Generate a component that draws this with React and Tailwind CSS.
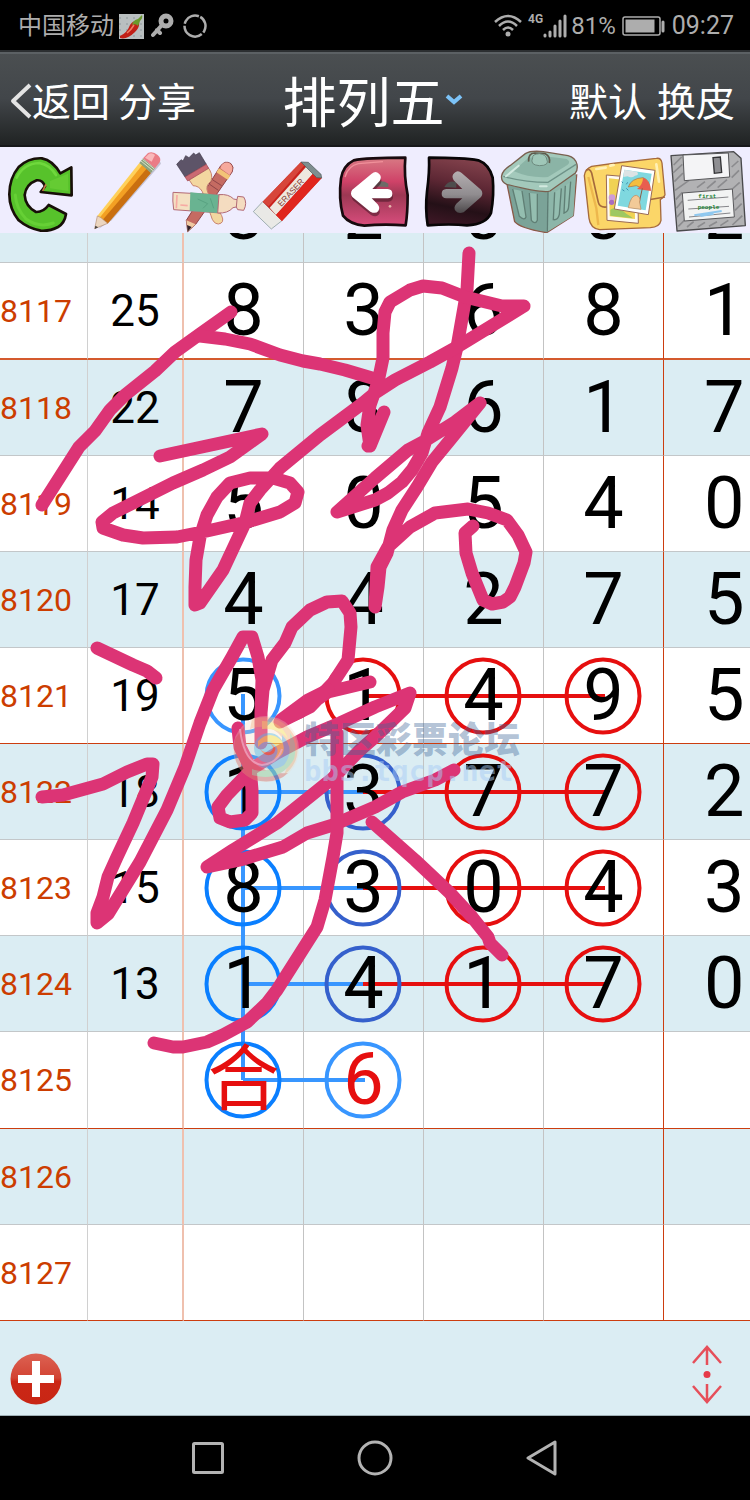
import React from 'react';

const rows = [
  { id: '', sum: '', digits: ['8', '2', '0', '0', '2'] },
  { id: '8117', sum: '25', digits: ['8', '3', '6', '8', '1'], groupEnd: true },
  { id: '8118', sum: '22', digits: ['7', '8', '6', '1', '7'] },
  { id: '8119', sum: '14', digits: ['5', '0', '5', '4', '0'] },
  { id: '8120', sum: '17', digits: ['4', '4', '2', '7', '5'] },
  { id: '8121', sum: '19', digits: ['5', '1', '4', '9', '5'], groupEnd: true },
  { id: '8122', sum: '18', digits: ['1', '3', '7', '7', '2'] },
  { id: '8123', sum: '15', digits: ['8', '3', '0', '4', '3'] },
  { id: '8124', sum: '13', digits: ['1', '4', '1', '7', '0'] },
  { id: '8125', sum: '', digits: ['合', '6', '', '', ''], groupEnd: true, predicted: true },
  { id: '8126', sum: '', digits: ['', '', '', '', ''] },
  { id: '8127', sum: '', digits: ['', '', '', '', ''], groupEnd: true },
];

const tallRows = ['8117', '8125'];

const BLUE = '#0a7fff';
const LIGHT_BLUE = '#3896ff';
const INDIGO = '#3560cc';
const RED = '#e60f0f';

const circles = [
  [243, 696, LIGHT_BLUE], [363, 696, RED], [483, 696, RED], [603, 696, RED],
  [243, 792, BLUE], [363, 792, INDIGO], [483, 792, RED], [603, 792, RED],
  [243, 888, BLUE], [363, 888, INDIGO], [483, 888, RED], [603, 888, RED],
  [243, 984, BLUE], [363, 984, INDIGO], [483, 984, RED], [603, 984, RED],
  [243, 1080, BLUE], [363, 1080, LIGHT_BLUE],
];

const links = [
  [243, 694, 243, 1080, LIGHT_BLUE],
  [243, 792, 363, 792, LIGHT_BLUE],
  [243, 888, 363, 888, LIGHT_BLUE],
  [243, 984, 363, 984, LIGHT_BLUE],
  [243, 1080, 365, 1080, LIGHT_BLUE],
  [363, 696, 605, 696, RED],
  [363, 792, 605, 792, RED],
  [363, 888, 605, 888, RED],
  [363, 984, 605, 984, RED],
];

// freehand pen strokes on top of the grid
const strokes = [
  '231,312 200,334 175,352 155,371 125,395 110,410 95,431 79,447 42,505',
  '200,336 225,339 250,344 280,355 303,361 320,364 345,370 372,378',
  '469,253 467,290 457,347 452,368 440,407 428,433 422,453 412,470 402,482 388,493 375,500 337,512 375,478 408,450 423,442 455,422 480,403 450,440 432,462 417,487 402,510 393,530 387,553 380,567 378,587 375,607 377,567 388,547 410,527 435,513 468,509 488,513 507,520 518,535 526,552 524,563 515,587 510,597 503,602 492,604 483,600 472,573 466,553 465,533 473,526',
  '368,446 384,412 370,446 367,425 370,405 378,382 383,358 383,333 385,312 390,302 410,290 423,286 442,288 465,297 502,306 524,306 457,347 430,362 395,380 375,393 363,403 320,435 280,468 260,490 250,503 245,523 223,570 200,603 195,605 195,587 196,560 200,537 207,515 217,497 230,483 250,478 273,478 290,483 298,492 295,503 280,512 247,522 207,531 177,537 143,538 123,535 103,528 102,522 113,513 143,498 173,483 203,470 230,457 262,434 160,456',
  '97,648 133,665 147,671 156,678',
  '42,797 63,795 103,784 127,772 147,764 153,764 152,777 133,823 117,857 108,877 103,897 97,913 97,923 108,914 140,862 167,810 185,767 200,723 213,690 232,657 243,637 252,637 258,657 262,680 261,713 261,743 261,713 263,690 272,660 285,643 292,627 310,610 327,602 342,601 350,613 351,627 348,660 333,683 310,707 280,722 305,708 328,692 370,682',
  '281,720 300,712 310,703 328,690 308,700 281,720',
  '238,728 240,747 250,767 252,790 252,813 245,820 230,822 220,818 218,807 227,795 253,768 277,753 307,737 340,723 375,707 410,693 405,708 375,737 360,750 333,778 277,823 233,850 207,867 240,860 283,847 307,833 333,825 375,807 402,792 435,780 454,770',
  '337,733 337,833 333,857 325,900 317,927 277,990 267,1003 247,1022 223,1035 207,1042 183,1047 173,1047 154,1043',
  '372,822 415,860 450,893 472,917 488,937 490,943 502,955',
];

const RefreshIcon = () => (
  <svg viewBox="0 6 250 258" className="block h-[86px] w-full">
    <path
      d="M181 85 L214 67 L215 151 L122 141 L135 124 Q128 104 110 106 Q78 118 74 150 Q76 184 108 201 Q130 202 146 180 L198 207 Q194 234 174 246 Q150 259 122 257 Q84 250 56 226 Q28 192 28 148 Q28 100 56 66 Q86 38 126 40 Q158 46 181 85 Z"
      fill="#57c22b" stroke="#170f08" strokeWidth="8" strokeLinejoin="round"
    />
    <path d="M50 98 Q70 56 118 54 Q150 60 168 90" fill="none" stroke="#6fd83c" strokeWidth="8" strokeLinecap="round" />
    <path d="M46 150 Q48 190 78 222 Q118 250 160 234" fill="none" stroke="#66d035" strokeWidth="9" strokeLinecap="round" />
    <path d="M150 108 L204 86 L205 138 L150 130 Z" fill="#65cb33" />
    <path d="M128 138 L138 118" stroke="#c67a45" strokeWidth="5" />
  </svg>
);

const PencilIcon = () => (
  <svg viewBox="250 6 250 258" className="block h-[86px] w-full">
    <path d="M296 252 L336 226 L484 56 L478 42 Z" fill="#a9a6bb" opacity="0.6" />
    <path d="M293 213 L419 54 L436 62 L306 220 Z" fill="#ffd15a" />
    <path d="M300 218 L430 58 L446 74 L314 230 Z" fill="#f3a023" />
    <path d="M308 226 L442 70 L454 84 L324 236 Z" fill="#c96f10" />
    <path d="M293 213 L285 251 L324 235 L313 226 L304 218 Z" fill="#ecd6c0" stroke="#b6906f" strokeWidth="2" />
    <path d="M287 242 L285 252 L296 247 Z" fill="#4b4441" />
    <path d="M419 54 L430 40 L466 70 L454 84 Z" fill="#8da27c" />
    <path d="M424 48 L460 77 M428 43 L464 72" stroke="#d8e2c4" strokeWidth="3" />
    <path d="M430 40 L445 24 Q460 18 474 30 Q486 40 480 52 L466 70 Z" fill="#ea7c86" />
    <path d="M436 38 L448 26 Q458 22 466 30 L456 50 Z" fill="#f9b8bb" />
  </svg>
);

const ToolsIcon = () => (
  <svg viewBox="500 6 250 258" className="block h-[86px] w-full">
    <path d="M558 226 L660 64 Q674 44 692 56 Q702 66 696 80 L586 238 L562 260 Z" fill="#c56b62" stroke="#8e4548" strokeWidth="3" />
    <path d="M656 70 L690 92 L682 104 L648 82 Z" fill="#f3c477" />
    <path d="M664 60 Q676 48 690 56 Q700 66 694 80 L688 90 L660 70 Z" fill="#f6a99c" />
    <path d="M636 104 L664 122 M628 118 L654 136" stroke="#8e4548" strokeWidth="3" />
    <path d="M558 226 L586 238 L562 260 Z" fill="#efc9a0" />
    <path d="M560 240 L574 246 L562 260 Z" fill="#33222a" />
    <path d="M562 98 L620 64 Q640 86 632 108 Q614 122 622 142 L664 212 Q674 234 654 237 Q638 236 632 212 L606 140 Q596 122 578 122 Z" fill="#f3d7a0" stroke="#c98270" strokeWidth="3" />
    <path d="M529 58 L542 44 L548 48 L556 32 L566 38 L580 24 L586 30 L597 23 L618 58 L554 96 Z" fill="#5d5468" stroke="#3d3746" strokeWidth="2" />
    <path d="M554 96 L618 58 L625 70 L562 108 Z" fill="#cb6a72" stroke="#9c4450" strokeWidth="2" />
    <path d="M518 142 Q516 168 520 194 L660 204 L664 150 Z" fill="#f4e0c2" stroke="#b26a76" strokeWidth="3" />
    <path d="M570 142 L656 150 L652 204 L568 198 Z" fill="#69b391" />
    <path d="M592 162 L622 176 L608 190 M630 160 L640 190" fill="none" stroke="#58a281" strokeWidth="3" />
    <path d="M656 149 Q684 146 700 162 L710 164 L712 154 L730 156 Q742 174 730 196 L712 194 L708 186 L698 188 Q682 206 652 204 Z" fill="#f4dcc0" stroke="#b26a76" strokeWidth="3" />
    <path d="M710 164 L708 186" stroke="#b26a76" strokeWidth="3" />
    <path d="M530 150 L528 190 M540 180 L562 182" stroke="#f7aaa4" strokeWidth="5" />
  </svg>
);

const EraserIcon = () => (
  <svg viewBox="0 6 250 258" className="block h-[86px] w-full">
    <path d="M38 170 L10 200 L64 252 L96 227 Z" fill="#e9e9e6" stroke="#77908f" strokeWidth="2" />
    <path d="M38 170 L153 51 L215 99 L96 228 Z" fill="#c9221c" />
    <path d="M38 170 L153 51 L164 60 L56 184 Z" fill="#d7463a" />
    <path d="M59 188 L170 64 L193 82 L78 210 Z" fill="#eee8df" />
    <path d="M78 210 L193 82 L215 99 L96 228 Z" fill="#e0251d" />
    <path d="M153 51 L175 52 L213 88 L215 99 L200 98 Z" fill="#7e8e8f" stroke="#4c5656" strokeWidth="2" />
    <text x="94" y="186" transform="rotate(-47 94 186)" fontSize="25" fill="#84352c" fontFamily="Liberation Sans, Arial, sans-serif">ERASER</text>
  </svg>
);

const UndoIcon = () => (
  <svg viewBox="250 6 250 258" className="block h-[86px] w-full">
    <defs>
      <linearGradient id="undo" x1="0" y1="0" x2="0" y2="1">
        <stop offset="0" stopColor="#d87a84" />
        <stop offset="0.35" stopColor="#cf4268" />
        <stop offset="0.55" stopColor="#9c3853" />
        <stop offset="1" stopColor="#d94d7d" />
      </linearGradient>
    </defs>
    <path d="M274 100 Q280 62 312 46 Q350 38 467 38 Q462 90 474 150 Q474 204 468 241 Q400 236 344 242 Q300 238 280 212 Q266 160 274 100 Z" fill="url(#undo)" stroke="#170a0e" strokeWidth="8" strokeLinejoin="round" />
    <path d="M286 96 Q296 62 326 56 L400 50" fill="none" stroke="#f0909a" strokeWidth="4" />
    <path d="M364 124 Q390 98 416 116 L416 126 Z" fill="#6d6a67" />
    <circle cx="421" cy="184" r="4" fill="#e7b5ab" />
    <g opacity="0.5" fill="#3b1420" transform="translate(2 10)">
      <path d="M428 146 Q428 133 414 132 H368 L390 108 Q398 94 388 86 Q378 76 366 86 L308 134 Q300 145 308 156 L362 200 Q378 208 386 198 Q392 188 384 178 L366 160 H414 Q428 159 428 146 Z" />
    </g>
    <path d="M428 146 Q428 133 414 132 H368 L390 108 Q398 94 388 86 Q378 76 366 86 L308 134 Q300 145 308 156 L362 200 Q378 208 386 198 Q392 188 384 178 L366 160 H414 Q428 159 428 146 Z" fill="#fff" />
  </svg>
);

const RedoIcon = () => (
  <svg viewBox="500 6 250 258" className="block h-[86px] w-full">
    <defs>
      <linearGradient id="redo" x1="0.6" y1="0" x2="0.4" y2="1">
        <stop offset="0" stopColor="#84434d" />
        <stop offset="0.4" stopColor="#5d2734" />
        <stop offset="0.75" stopColor="#241017" />
        <stop offset="1" stopColor="#3b1724" />
      </linearGradient>
      <linearGradient id="redoArrow" x1="0" y1="0" x2="0" y2="1">
        <stop offset="0" stopColor="#b4aeb0" />
        <stop offset="0.55" stopColor="#918d90" />
        <stop offset="1" stopColor="#4c484a" />
      </linearGradient>
    </defs>
    <path d="M536 38 Q640 38 684 46 Q716 58 727 98 Q732 150 722 204 Q708 238 650 241 Q600 236 532 241 Q524 190 530 140 Q538 80 536 38 Z" fill="url(#redo)" stroke="#080506" strokeWidth="8" strokeLinejoin="round" />
    <path d="M582 126 Q596 104 618 112 L618 128 Z" fill="#4e4d4d" />
    <path d="M574 146 Q574 133 588 132 H636 L610 106 Q602 92 612 84 Q622 74 634 84 L692 134 Q700 145 692 156 L640 202 Q624 208 616 198 Q608 188 618 176 L636 160 H588 Q574 159 574 146 Z" fill="url(#redoArrow)" />
  </svg>
);

const TrashIcon = () => (
  <svg viewBox="0 6 250 258" className="block h-[86px] w-full">
    <path d="M20 112 L44 230 Q60 250 140 263 L220 212 L230 90 Z" fill="#7ba398" stroke="#8c5a48" strokeWidth="4" />
    <path d="M142 140 L140 262 L220 212 L228 80 Z" fill="#8db6a9" />
    <path d="M144 138 L142 260" stroke="#5d7c74" strokeWidth="4" />
    <path d="M38 132 L58 214 Q74 228 78 216 L66 138 M88 144 L94 226 Q106 240 112 226 L112 146 M164 142 L160 224 Q174 226 178 208 L184 130 M196 122 L192 204 Q206 200 206 184 L212 110" fill="#94beb0" stroke="#607f75" strokeWidth="4" />
    <path d="M5 92 Q8 76 30 62 L76 26 Q92 16 130 20 L204 32 Q226 38 231 58 Q234 76 226 84 L150 138 Q130 146 20 118 Q2 110 5 92 Z" fill="#a3c9bb" stroke="#7a604f" strokeWidth="4" />
    <path d="M10 94 Q70 112 144 112 L228 58" fill="none" stroke="#6e9388" strokeWidth="4" />
    <path d="M40 78 L84 40 Q116 28 200 42 Q214 50 202 60 L144 96 Q90 100 40 78 Z" fill="#8bb4a6" />
    <path d="M86 50 Q84 24 104 24 L136 26 Q152 34 148 54" fill="none" stroke="#5f5a4c" strokeWidth="5" />
    <path d="M98 38 Q96 28 118 26 Q138 28 140 42 Q150 62 118 62 Q88 60 98 38 Z" fill="#9fc7b8" stroke="#6c8a7d" strokeWidth="3" />
    <path d="M18 94 L56 62 M120 124 L140 124" stroke="#d2e9df" strokeWidth="6" strokeLinecap="round" />
  </svg>
);

const PhotosIcon = () => (
  <svg viewBox="250 6 250 258" className="block h-[86px] w-full">
    <path d="M254 92 Q256 72 276 64 L350 54 L470 40 Q484 38 487 54 L496 150 Q490 160 482 164 L484 226 Q480 246 452 248 L300 254 Q272 250 268 220 Z" fill="#fbd668" stroke="#a66a3c" strokeWidth="4" />
    <path d="M260 76 Q270 68 276 84 L296 172 Q300 188 320 186 L496 156" fill="none" stroke="#a66a3c" strokeWidth="5" />
    <path d="M266 96 L290 190 L296 240" fill="none" stroke="#edb74d" strokeWidth="7" />
    <path d="M290 72 L318 68 M332 62 L342 60 M470 58 L478 110" stroke="#fff1b6" strokeWidth="8" strokeLinecap="round" />
    <path d="M320 90 L414 98 L416 235 L322 226 Z" fill="#fffaf0" stroke="#9a6a55" strokeWidth="3" />
    <path d="M328 100 L404 108 L406 222 L330 214 Z" fill="#f0d254" />
    <path d="M332 194 Q352 180 380 206 Q394 214 400 220 L332 212 Z" fill="#9fc861" />
    <circle cx="337" cy="158" r="10" fill="#cf9cd6" />
    <circle cx="336" cy="172" r="8" fill="#a86cc0" />
    <path d="M366 62 L466 76 L446 209 L344 192 Z" fill="#fff" stroke="#9a6a55" strokeWidth="3" />
    <path d="M374 74 L456 86 L438 196 L354 182 Z" fill="#7fd8df" />
    <path d="M374 74 L412 80 Q420 90 406 92 Q396 100 384 94 L371 96 Z" fill="#dce3e4" />
    <path d="M386 126 Q394 100 430 98 Q450 104 452 134 L428 130 L410 122 Z" fill="#f5bd3f" stroke="#ab6a3c" strokeWidth="2" />
    <path d="M430 98 Q452 106 454 138 L412 132 Q430 118 430 98 Z" fill="#e85e50" />
    <path d="M428 130 L418 176" stroke="#8d5a44" strokeWidth="3" />
    <path d="M386 188 Q394 150 410 151 Q424 156 420 172 L424 193 Z" fill="#f2ca98" stroke="#ba8559" strokeWidth="2" />
    <path d="M366 110 L370 114 M384 112 L380 118 M368 134 L374 138 M380 130 L386 136" stroke="#388fae" strokeWidth="3" />
  </svg>
);

const SaveIcon = () => (
  <svg viewBox="500 6 250 258" className="block h-[86px] w-full">
    <path d="M512 32 L700 20 L722 40 L735 242 L530 258 Z" fill="#b2b2b4" stroke="#4a4a4c" strokeWidth="4" strokeLinejoin="round" />
    <path d="M520 60 L544 36 M518 84 L546 58 M522 110 L548 84 M524 136 L566 106 M526 164 L546 142 M528 190 L546 168 M530 216 L550 194 M534 244 L556 222 M560 246 L580 230 M592 246 L614 232 M626 244 L650 230 M660 242 L684 226 M696 240 L726 212 M704 196 L724 176 M702 164 L722 144 M696 132 L718 112 M694 98 L716 76 M694 66 L714 48 M590 128 L614 110 M620 130 L646 108 M652 128 L680 104" stroke="#8b8b8e" strokeWidth="5" />
    <path d="M548 30 L684 24 L688 96 L552 107 Z" fill="#f4f4f6" stroke="#555558" strokeWidth="3" />
    <path d="M638 38 L660 36 L664 82 L642 85 Z" fill="#8e8e92" stroke="#333336" strokeWidth="4" />
    <path d="M546 144 L696 132 L702 216 L552 228 Z" fill="#f2f3f3" stroke="#58585b" strokeWidth="3" />
    <path d="M562 166 L684 156 M564 192 L686 184 M566 216 L690 204" stroke="#86868a" strokeWidth="3" />
    <path d="M582 211 L664 198 M600 213 L640 206" stroke="#8fc8ef" strokeWidth="6" />
    <text x="594" y="159" fontSize="18" fontWeight="700" fill="#158030" fontFamily="Liberation Mono, monospace">first</text>
    <text x="592" y="192" fontSize="18" fontWeight="700" fill="#158030" fontFamily="Liberation Mono, monospace">people</text>
  </svg>
);

const tools = [
  { label: '刷新', Icon: RefreshIcon },
  { label: '铅笔', Icon: PencilIcon },
  { label: '画具', Icon: ToolsIcon },
  { label: '橡皮', Icon: EraserIcon },
  { label: '撤销', Icon: UndoIcon },
  { label: '重做', Icon: RedoIcon },
  { label: '清空', Icon: TrashIcon },
  { label: '相册', Icon: PhotosIcon },
  { label: '保存', Icon: SaveIcon },
];

const StatusBar = () => (
  <div className="flex h-[50px] items-center justify-between bg-black pt-[2px] pr-4 pl-[18px] text-[25px] leading-[48px] text-[#adadad]">
    <div className="flex items-center">
      <span className="text-[24px]">中国移动</span>
      <svg viewBox="0 0 26 26" className="ml-1 h-[26px] w-[26px]">
        <rect x="1" y="1" width="25" height="25" fill="#b9bfc0" />
        <path d="M1 5h25M1 11h25M1 17h25M1 23h25" stroke="#8c979c" strokeWidth="1" strokeDasharray="2 5" />
        <path d="M2 23 Q9 20 12 12 Q16 6 21 9 Q22 14 17 19 Q9 27 2 25 Z" fill="#c11f17" />
        <path d="M14 12 Q18 10 20 13 L22 8 Q25 5 24 2 L20 6 Q15 7 14 12 Z" fill="#6a9a2c" />
        <path d="M9 20 Q13 17 16 12" stroke="#ef7a62" strokeWidth="1.5" fill="none" />
      </svg>
      <svg viewBox="0 0 24 26" className="ml-[7px] h-[26px] w-[24px]">
        <circle cx="15" cy="8" r="5" fill="none" stroke="#adadad" strokeWidth="5" />
        <path d="M11 12 L2 22 M6 17 L9 20" stroke="#adadad" strokeWidth="4" strokeLinecap="round" />
      </svg>
      <svg viewBox="0 0 26 26" className="ml-[7px] h-[26px] w-[26px]">
        <circle cx="13" cy="13" r="10.5" fill="none" stroke="#adadad" strokeWidth="2.5" strokeDasharray="18 2 24 2 18 2" transform="rotate(-60 13 13)" />
      </svg>
    </div>
    <div className="flex items-center">
      <svg viewBox="0 0 28 24" className="h-[24px] w-[28px]" fill="none" stroke="#adadad" strokeWidth="2.5">
        <path d="M1 8 Q14 -4 27 8 M5 12 Q14 3 23 12 M9 16 Q14 11 19 16" />
        <circle cx="14" cy="20" r="2.5" fill="#adadad" stroke="none" />
      </svg>
      <span className="ml-[6px] self-start pt-[9px] text-[12px] leading-[16px] font-bold">4G</span>
      <svg viewBox="0 0 24 24" className="h-[24px] w-[24px]" stroke="#adadad" strokeWidth="3" strokeLinecap="round">
        <path d="M2 21v1M7 18v4M12 12v10M17 7v15M22 2v20" />
      </svg>
      <span className="ml-1 text-[24px]">81%</span>
      <svg viewBox="0 0 44 22" className="ml-[6px] h-[22px] w-[44px]" fill="none" stroke="#adadad">
        <rect x="1" y="2" width="37" height="18" rx="2" strokeWidth="1.5" />
        <rect x="4" y="5" width="28" height="12" fill="#adadad" />
        <path d="M41 7v9" strokeWidth="3" strokeLinecap="round" />
      </svg>
      <span className="ml-[6px]">09:27</span>
    </div>
  </div>
);

const Header = () => (
  <header className="flex h-[97px] items-center justify-between border-t-2 border-b-2 border-t-[#2c2f31] border-b-[#17181a] bg-linear-to-b from-[#4b4f51] via-[#42464a] to-[#202323] px-[10px] pt-2 text-white shadow-[inset_0_2px_0_#5c6164]">
    <div className="flex flex-1 items-center text-[39px] leading-[56px]">
      <button className="flex items-center">
        <svg viewBox="0 0 22 36" className="mb-1 h-[36px] w-[22px]">
          <path d="M20 2 L3 18 L20 34" fill="none" stroke="#e4e4e4" strokeWidth="4" strokeLinejoin="round" />
        </svg>
        返回
      </button>
      <button className="ml-2">分享</button>
    </div>
    <button className="flex items-center pt-1 text-[54px] leading-[64px]">
      排列五
      <svg viewBox="0 0 18 12" className="mb-3 h-[12px] w-[18px]">
        <path d="M2 3 L9 9 L16 3" fill="none" stroke="#7cc3f8" strokeWidth="4" />
      </svg>
    </button>
    <div className="flex flex-1 items-center justify-end pr-[5px] text-[39px] leading-[56px]">
      <button>默认</button>
      <button className="ml-[10px]">换皮</button>
    </div>
  </header>
);

const ResultTable = () => (
  <table className="-mt-[66px] w-full table-fixed border-separate border-spacing-0">
    <colgroup>
      <col className="w-[88px]" />
      <col className="w-[96px]" />
      <col className="w-[120px]" />
      <col className="w-[120px]" />
      <col className="w-[120px]" />
      <col className="w-[120px]" />
      <col />
    </colgroup>
    <tbody>
      {rows.map((row, index) => {
        let line = 'border-b border-b-[#c3c7c9]';
        if (row.groupEnd) line = 'border-b border-b-[#cc3d0f]';
        if (row.id === '8117') line = 'border-b-2 border-b-[#d45a2e]';
        return (
          <tr
            key={index}
            className={`${tallRows.includes(row.id) ? 'h-[97px]' : 'h-[96px]'} ${index % 2 === 0 ? 'bg-[#dbedf3]' : 'bg-white'}`}
          >
            <th scope="row" className={`${line} border-r border-r-[#d0d0d0] p-0 text-left text-[32px] leading-[40px] font-normal text-[#cc3d00]`}>
              {row.id}
            </th>
            <td className={`${line} border-r-2 border-r-[#efc0ae] p-0 text-center text-[44px] leading-[56px]`}>{row.sum}</td>
            {row.digits.map((digit, i) => {
              let side = 'border-r border-r-[#c3c3c3] text-center';
              if (i === 3) side = 'border-r border-r-[#cc3d0f] text-center';
              if (i === 4) side = 'pl-10 text-left';
              return (
                <td key={i} className={`${line} ${side} py-0 text-[72px] leading-[84px] ${i === 4 ? '' : 'px-0'}`}>
                  <span className={`relative z-10 ${row.predicted ? 'text-[#e60f0f]' : 'text-black'}`}>{digit}</span>
                </td>
              );
            })}
          </tr>
        );
      })}
    </tbody>
  </table>
);

const Watermark = () => (
  <div className="pointer-events-none absolute top-[482px] left-[232px] z-30 flex items-center gap-1" aria-hidden="true">
    <svg viewBox="0 0 68 68" className="h-[68px] w-[68px] opacity-60">
      <circle cx="34" cy="34" r="33" fill="#f3dcc4" opacity="0.5" />
      <path d="M20 4 Q50 -4 64 24 Q70 46 52 60 Q64 34 46 18 Q34 8 18 14 Z" fill="#f3b887" opacity="0.8" />
      <path d="M30 6 Q50 6 56 24 Q46 12 30 14 Z" fill="#f8e57c" />
      <path d="M3 24 Q-2 54 22 65 Q44 70 56 58 Q36 60 22 48 Q8 36 12 12 Z" fill="#d86a62" opacity="0.7" />
      <path d="M20 60 Q48 68 62 44 Q66 28 58 18 Q60 46 38 54 Q28 58 20 54 Z" fill="#a9d3a5" />
      <path d="M50 20 Q64 34 52 50 Q40 58 26 50 Q44 48 50 36 Z" fill="#7fb7d8" />
      <circle cx="37" cy="33" r="15" fill="#7fc4df" />
      <path d="M26 26 Q38 14 50 26 Q56 40 42 44 Q50 34 40 28 Q32 24 26 32 Z" fill="#f5e063" />
      <path d="M28 34 Q34 44 42 38 Q46 32 38 28 Q44 34 38 37 Q32 38 28 34 Z" fill="#e8743f" />
      <path d="M8 14 Q12 48 30 50 Q46 48 50 34" fill="none" stroke="#fff" strokeWidth="2" opacity="0.7" />
    </svg>
    <div className="flex flex-col pt-2">
      <span className="text-[36px] leading-[36px] font-black text-[#3c6496]/40">特区彩票论坛</span>
      <span className="font-['DejaVu_Sans_Mono'] text-[29px] leading-[24px] font-bold text-[#a8ccf5]/50">bbs.tqcp.net</span>
    </div>
  </div>
);

const Board = () => (
  <main className="relative overflow-hidden">
    <ResultTable />
    <svg viewBox="0 233 750 1088" className="pointer-events-none absolute top-0 left-0 z-0 h-[1088px] w-[750px]">
      {links.map(([x1, y1, x2, y2, color]) => (
        <line key={`${x1}-${y1}-${x2}-${y2}`} x1={x1} y1={y1} x2={x2} y2={y2} stroke={color} strokeWidth="4" />
      ))}
      {circles.map(([cx, cy, color]) => (
        <circle key={`${cx}-${cy}`} cx={cx} cy={cy} r="36.5" fill="none" stroke={color} strokeWidth="4" />
      ))}
    </svg>
    <svg viewBox="0 233 750 1088" className="pointer-events-none absolute top-0 left-0 z-20 h-[1088px] w-[750px]">
      <g fill="none" stroke="#dc3475" strokeWidth="13" strokeLinecap="round" strokeLinejoin="round">
        {strokes.map((points) => (
          <polyline key={points} points={points} />
        ))}
      </g>
    </svg>
    <Watermark />
  </main>
);

const Footer = () => (
  <footer className="flex h-[95px] items-center justify-between border-b border-b-[#9fb0b6] bg-[#dbedf3] pr-7 pl-[10px]">
    <button aria-label="添加" className="mt-[22px]">
      <svg viewBox="0 0 54 54" className="block h-[54px] w-[54px]">
        <defs>
          <linearGradient id="plus" x1="0" y1="0" x2="0" y2="1">
            <stop offset="0" stopColor="#dc6253" />
            <stop offset="0.48" stopColor="#d24333" />
            <stop offset="0.55" stopColor="#cb2716" />
            <stop offset="1" stopColor="#c82614" />
          </linearGradient>
        </defs>
        <circle cx="26" cy="27" r="25.5" fill="url(#plus)" />
        <path d="M26 9v36M8 27h36" stroke="#fff" strokeWidth="8" />
      </svg>
    </button>
    <button aria-label="滚动" className="mt-[12px]">
      <svg viewBox="0 0 30 60" className="block h-[60px] w-[30px]" fill="none" stroke="#e64f5a" strokeWidth="2.5">
        <path d="M1 19 L15 3 L29 19 M15 3 V21 M1 42 L15 58 L29 42 M15 58 V40" />
        <circle cx="15" cy="30.5" r="3.5" fill="#e63a48" stroke="none" />
      </svg>
    </button>
  </footer>
);

const NavBar = () => (
  <nav className="grid h-[84px] grid-cols-3 items-center justify-items-center bg-black px-[125px]">
    <button aria-label="最近任务">
      <svg viewBox="0 0 36 36" className="block h-[36px] w-[36px]" fill="none" stroke="#b3b3b3" strokeWidth="3">
        <rect x="3.5" y="3.5" width="29" height="29" rx="1" />
      </svg>
    </button>
    <button aria-label="主页">
      <svg viewBox="0 0 36 36" className="block h-[36px] w-[36px]" fill="none" stroke="#b3b3b3" strokeWidth="3">
        <circle cx="18" cy="18" r="16" />
      </svg>
    </button>
    <button aria-label="返回键">
      <svg viewBox="0 0 36 36" className="block h-[36px] w-[36px]" fill="none" stroke="#b3b3b3" strokeWidth="3" strokeLinejoin="round">
        <path d="M31 2 V34 L4 18 Z" />
      </svg>
    </button>
  </nav>
);

export default function App() {
  return (
    <div className="min-h-screen bg-black font-[Roboto,'Noto_Sans_CJK_SC',sans-serif]">
      <StatusBar />
      <Header />
      <div className="grid grid-cols-9 bg-[#efedfe]">
        {tools.map(({ label, Icon }) => (
          <button key={label} aria-label={label}>
            <Icon />
          </button>
        ))}
      </div>
      <Board />
      <Footer />
      <NavBar />
    </div>
  );
}
